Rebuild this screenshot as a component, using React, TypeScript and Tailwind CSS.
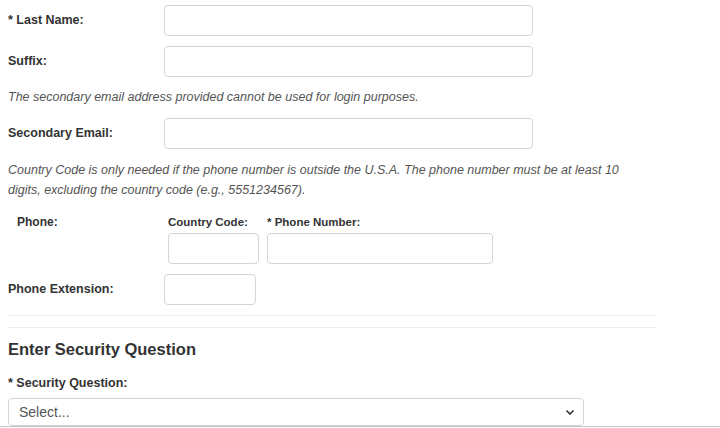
import React from "react";

const font = { fontFamily: '"Liberation Sans", Arial, sans-serif' };

function Field({ label, width = "w-[369px]" }: { label: string; width?: string }) {
  return (
    <div className="flex items-center">
      <label className="w-[156px] shrink-0 text-[12.5px] font-bold text-[#333]">{label}</label>
      <input
        type="text"
        className={`h-[31px] ${width} rounded-[4px] border border-[#d4d4d4] bg-white`}
      />
    </div>
  );
}

export default function App() {
  return (
    <div className="h-[428px] w-[720px] overflow-hidden bg-white" style={font}>
      <div className="w-[656px] pl-2 pt-[5px]">
        <Field label="* Last Name:" />

        <div className="mt-[10px]">
          <Field label="Suffix:" />
        </div>

        <p className="mt-[10px] text-[12.5px] italic leading-[20px] text-[#555]">
          The secondary email address provided cannot be used for login purposes.
        </p>

        <div className="mt-[11px]">
          <Field label="Secondary Email:" />
        </div>

        <p className="mt-[11px] max-w-[636px] text-[12.5px] italic leading-[20px] text-[#555]">
          Country Code is only needed if the phone number is outside the U.S.A. The phone
          number must be at least 10 digits, excluding the country code (e.g., 5551234567).
        </p>

        {/* phone block */}
        <div className="mt-[15px] flex">
          <div className="w-[160px] shrink-0 pl-[9px] text-[12px] font-bold leading-[14px] text-[#333]">
            Phone:
          </div>
          <div className="flex flex-col">
            <label className="text-[11.5px] font-bold leading-[14px] text-[#333]">
              Country Code:
            </label>
            <input
              type="text"
              className="mt-[4px] h-[31px] w-[91px] rounded-[4px] border border-[#d4d4d4]"
            />
          </div>
          <div className="ml-[8px] flex flex-col">
            <label className="text-[11.5px] font-bold leading-[14px] text-[#333]">
              * Phone Number:
            </label>
            <input
              type="text"
              className="mt-[4px] h-[31px] w-[226px] rounded-[4px] border border-[#d4d4d4]"
            />
          </div>
        </div>

        <div className="mt-[10px]">
          <Field label="Phone Extension:" width="w-[92px]" />
        </div>

        <div className="mt-[10px] border-t border-[#eeeeee]" />
        <div className="mt-[11px] border-t border-[#eeeeee]" />

        <h3 className="mt-[11px] text-[16.5px] font-bold leading-[20px] text-[#333]">
          Enter Security Question
        </h3>

        <label className="mt-[16px] block text-[12.5px] font-bold leading-[16px] text-[#333]">
          * Security Question:
        </label>

        <div className="relative mt-[7px] flex h-[28px] w-[576px] items-center rounded-[4px] border border-[#d4d4d4] pl-[10px] text-[14px] text-[#555]">
          Select...
          <svg
            className="absolute right-[8px] top-[10px]"
            width="10"
            height="7"
            viewBox="0 0 10 7"
            fill="none"
          >
            <polyline points="1.5,1.5 5,5 8.5,1.5" stroke="#333" strokeWidth="1.6" />
          </svg>
        </div>
      </div>
      <div className="h-px w-full bg-[#c4c4c4]" />
    </div>
  );
}
